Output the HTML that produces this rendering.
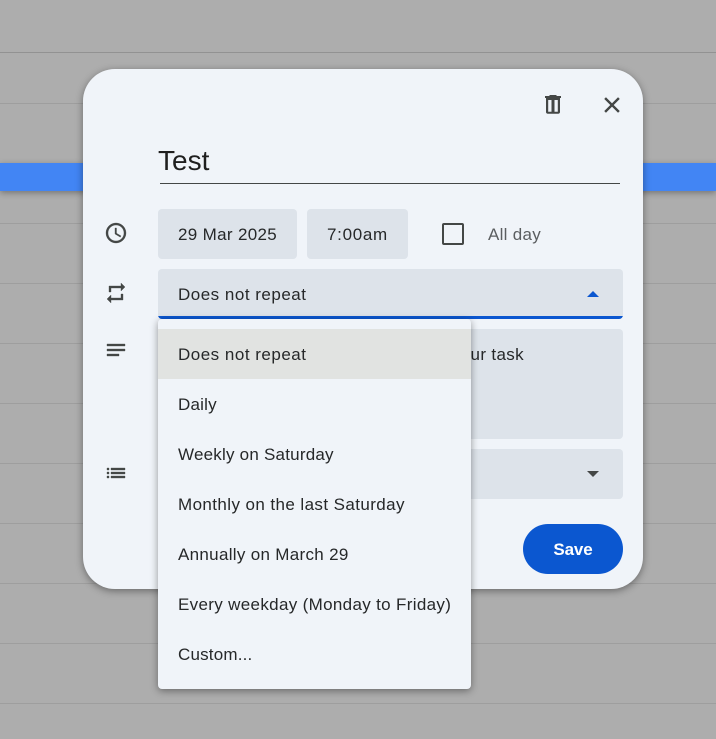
<!DOCTYPE html>
<html>
<head>
<meta charset="utf-8">
<style>
html,body{margin:0;padding:0}
body{width:716px;height:739px;overflow:hidden;position:relative;background:#adadad;font-family:"Liberation Sans",sans-serif;color:#262829;font-size:17px}
.abs,.l,.t,.f,svg{position:absolute}
.l{left:0;width:716px;height:1px;background:#9e9e9e}
.blue{position:absolute;left:0;top:163px;width:716px;height:28px;background:#4285f4;box-shadow:0 2px 6px rgba(0,0,0,.32)}
.card{position:absolute;left:83px;top:69px;width:560px;height:520px;border-radius:32px;background:#f0f4f9;box-shadow:0 2px 8px rgba(0,0,0,.4)}
.f{background:#dde3ea;border-radius:4px}
.t{white-space:nowrap;line-height:20px}
.menu{position:absolute;left:158px;top:319px;width:313px;height:370px;background:#f0f4f9;border-radius:4px;box-shadow:0 2px 8px rgba(0,0,0,.4)}
.sel{position:absolute;left:0;top:10px;width:313px;height:50px;background:#e1e3e1}
svg{fill:#444746;overflow:visible}
.s path{stroke:#444746;stroke-width:.35}
</style>
</head>
<body>
<div class="l" style="top:52px;background:#929292"></div>
<div class="l" style="top:103px"></div>
<div class="l" style="top:223px"></div>
<div class="l" style="top:283px"></div>
<div class="l" style="top:343px"></div>
<div class="l" style="top:403px"></div>
<div class="l" style="top:463px"></div>
<div class="l" style="top:523px"></div>
<div class="l" style="top:583px"></div>
<div class="l" style="top:643px"></div>
<div class="l" style="top:703px"></div>
<div class="blue"></div>
<div class="card"></div>

<svg style="left:544px;top:94px" width="18" height="20" viewBox="0 0 18 20"><path fill-rule="evenodd" d="M6 1h6l1 1h4v2H16V18c0 1-.8 1.800-1.800 1.800H3.800C2.800 19.800 2 19 2 18V4H1V2h4zM4.200 6v11.800H7.500V6zM10.500 6v11.800H13.800V6z"/></svg>
<svg class="s" style="left:598.500px;top:91.500px" width="26" height="26" viewBox="0 0 24 24"><path d="M19 6.410L17.590 5 12 10.590 6.410 5 5 6.410 10.590 12 5 17.590 6.410 19 12 13.410 17.590 19 19 17.590 13.410 12z"/></svg>

<div class="t" style="left:158px;top:145px;font-size:28px;line-height:32px;letter-spacing:0;color:#1f1f1f">Test</div>
<div class="abs" style="left:160px;top:183px;width:460px;height:1px;background:#444746"></div>

<svg class="s" style="left:104px;top:221px" width="24" height="24" viewBox="0 0 24 24"><path d="M11.990 2C6.470 2 2 6.480 2 12s4.470 10 9.990 10C17.520 22 22 17.520 22 12S17.520 2 11.990 2zM12 20c-4.420 0-8-3.580-8-8s3.580-8 8-8 8 3.580 8 8-3.580 8-8 8zm.5-13H11v6l5.250 3.150.75-1.230-4.500-2.670z"/></svg>
<svg class="s" style="left:104px;top:281px" width="24" height="24" viewBox="0 0 24 24"><path d="M7 7h10v3l4-4-4-4v3H5v6h2V7zm10 10H7v-3l-4 4 4 4v-3h12v-6h-2v4z"/></svg>
<svg class="s" style="left:104px;top:338px" width="24" height="24" viewBox="0 0 24 24"><path d="M3 6h18v2H3zM3 11h18v2H3zM3 16h12v2H3z"/></svg>
<svg class="s" style="left:104px;top:461px" width="24" height="24" viewBox="0 0 24 24"><path d="M3 13h2v-2H3v2zm0 4h2v-2H3v2zm0-8h2V7H3v2zm4 4h14v-2H7v2zm0 4h14v-2H7v2zM7 7v2h14V7H7z"/></svg>

<div class="f" style="left:158px;top:209px;width:139px;height:50px"></div>
<div class="t" style="left:178px;top:225px;letter-spacing:.33px">29 Mar 2025</div>
<div class="f" style="left:307px;top:209px;width:101px;height:50px"></div>
<div class="t" style="left:327px;top:225px;letter-spacing:.7px">7:00am</div>
<div class="abs" style="left:442px;top:223px;width:18px;height:18px;border:2px solid #444746;border-radius:2px"></div>
<div class="t" style="left:488px;top:225px;color:#5b5e60;letter-spacing:.28px">All day</div>

<div class="f" style="left:158px;top:269px;width:465px;height:50px;overflow:hidden"><div class="abs" style="left:0;bottom:0;width:465px;height:3px;background:#0b57d0"></div></div>
<div class="t" style="left:178px;top:285px;letter-spacing:.5px">Does not repeat</div>
<svg style="left:587px;top:291px" width="12" height="6" viewBox="0 0 12 6"><path style="fill:#0b57d0" d="M0 6L6 0l6 6z"/></svg>

<div class="f" style="left:158px;top:329px;width:465px;height:110px"></div>
<div class="t" style="left:178px;top:345px;width:346px;text-align:right;letter-spacing:.35px">Add a description for your task</div>
<div class="f" style="left:158px;top:449px;width:465px;height:50px"></div>
<svg style="left:587px;top:471px" width="12" height="6" viewBox="0 0 12 6"><path d="M0 0l6 6 6-6z"/></svg>

<div class="abs" style="left:523px;top:524px;width:100px;height:50px;border-radius:25px;background:#0b57d0"></div>
<div class="t" style="left:523px;top:540px;width:100px;text-align:center;color:#fff;font-weight:700;font-size:17px;letter-spacing:-.1px">Save</div>

<div class="menu"><div class="sel"></div></div>
<div class="t" style="left:178px;top:345px;letter-spacing:.5px">Does not repeat</div>
<div class="t" style="left:178px;top:395px;letter-spacing:.2px">Daily</div>
<div class="t" style="left:178px;top:445px;letter-spacing:.22px">Weekly on Saturday</div>
<div class="t" style="left:178px;top:495px;letter-spacing:.41px">Monthly on the last Saturday</div>
<div class="t" style="left:178px;top:545px;letter-spacing:.31px">Annually on March 29</div>
<div class="t" style="left:178px;top:595px;letter-spacing:.33px">Every weekday (Monday to Friday)</div>
<div class="t" style="left:178px;top:645px;letter-spacing:.19px">Custom...</div>
</body>
</html>
